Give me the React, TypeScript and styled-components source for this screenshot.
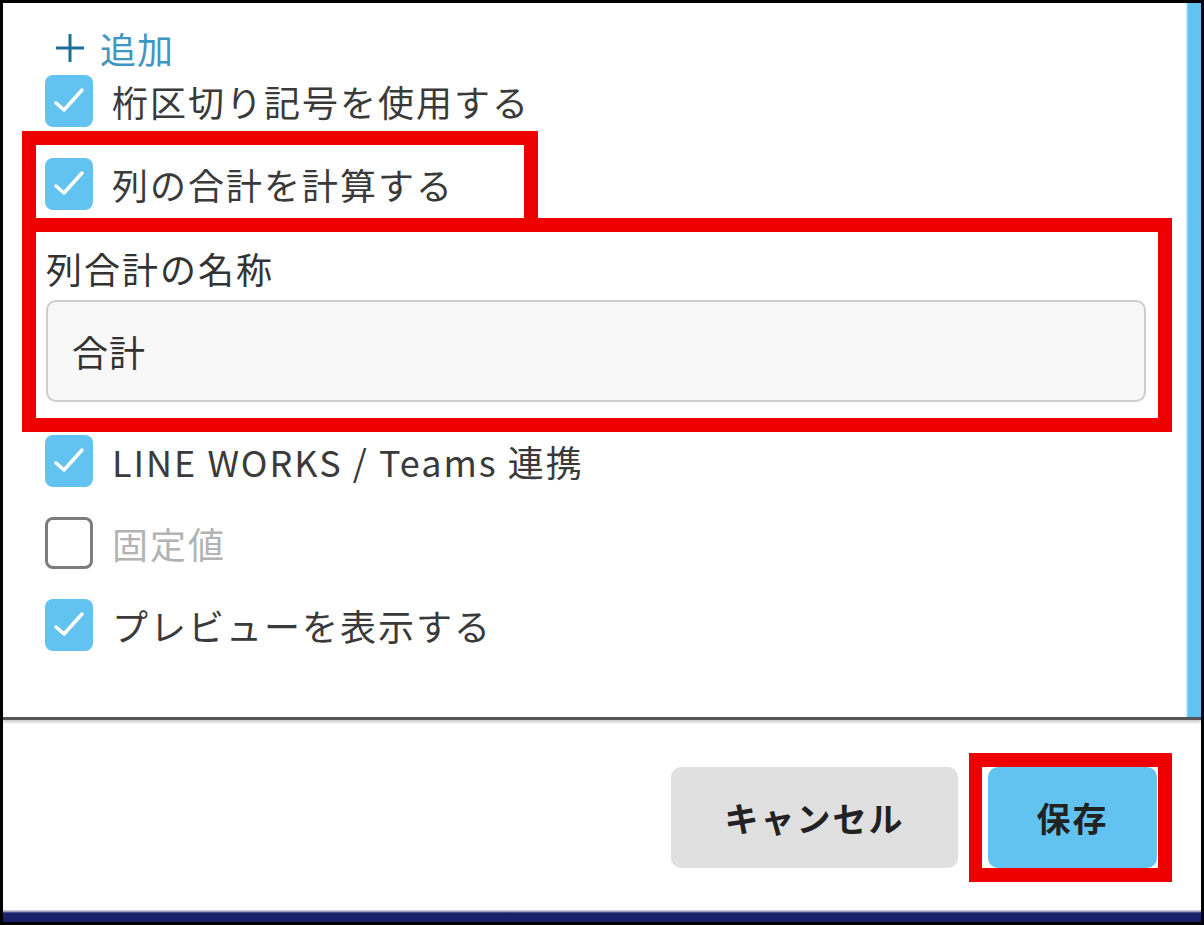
import React from "react";
import styled, { createGlobalStyle } from "styled-components";

const GlobalStyle = createGlobalStyle`
  html, body { margin: 0; padding: 0; background: #ffffff; overflow: hidden; }
  body { font-family: "Noto Sans CJK JP", "Noto Sans", sans-serif; }
  * { box-sizing: border-box; }
`;

const Frame = styled.div`
  width: 1204px;
  height: 925px;
  border: 3px solid #000;
  display: flex;
  flex-direction: column;
  background: #fff;
  overflow: hidden;
`;

const ScrollArea = styled.div`
  height: 714px;
  display: grid;
  grid-template-columns: 1fr 15px;
`;

const Content = styled.div`
  min-width: 0;
  display: flex;
  flex-direction: column;
  padding-left: 19px;
  padding-top: 25px;
`;

const Scrollbar = styled.div`
  height: 100%;
  background: linear-gradient(90deg, #c4e8f8 0, #c4e8f8 1px, #62c3f0 2px, #62c3f0 100%);
`;

const AddLink = styled.div`
  display: flex;
  align-items: center;
  gap: 14px;
  padding-left: 32px;
  height: 40px;
  font-size: 36px;
  line-height: 40px;
  letter-spacing: 1px;
  color: #3f96c2;
`;

const PlusIcon = styled.svg`
  width: 32px;
  height: 32px;
  display: block;
`;

const OptionRow = styled.div<{ $indent: number; $mt: number; $mb?: number }>`
  display: flex;
  align-items: center;
  gap: 19px;
  padding-left: ${(p) => p.$indent}px;
  margin-top: ${(p) => p.$mt}px;
  margin-bottom: ${(p) => p.$mb ?? 0}px;
  height: 52px;
`;

const Box = styled.span<{ $checked: boolean }>`
  width: 48px;
  height: 52px;
  flex: 0 0 48px;
  border-radius: 8px;
  display: flex;
  align-items: center;
  justify-content: center;
  background: ${(p) => (p.$checked ? "#62c3f0" : "#ffffff")};
  border: ${(p) => (p.$checked ? "none" : "3px solid #7c7c7c")};
`;

const OptionText = styled.span<{ $disabled?: boolean }>`
  font-size: 36px;
  line-height: 40px;
  letter-spacing: 2px;
  white-space: nowrap;
  color: ${(p) => (p.$disabled ? "#b3b3b3" : "#3a3a3a")};
`;

const Annotation = styled.div<{ $width: number; $noBottom?: boolean }>`
  width: ${(p) => p.$width}px;
  border: 14px solid #ee0000;
  border-bottom-width: ${(p) => (p.$noBottom ? 0 : 14)}px;
  display: flex;
  flex-direction: column;
`;

const FieldBlock = styled.div`
  display: flex;
  flex-direction: column;
  padding: 16px 12px 16px 10px;
`;

const FieldLabel = styled.div`
  font-size: 36px;
  line-height: 40px;
  letter-spacing: 2px;
  color: #333;
`;

const TextInput = styled.div`
  margin-top: 12px;
  height: 102px;
  border: 2px solid #cdcdcd;
  border-radius: 10px;
  background: #f8f8f8;
  display: flex;
  align-items: center;
  padding-left: 24px;
  font-size: 36px;
  letter-spacing: 1px;
  color: #333;
`;

const Divider = styled.div`
  height: 3px;
  background: #555;
  box-shadow: 0 2px 3px rgba(0, 0, 0, 0.25);
`;

const Footer = styled.div`
  flex: 1;
  display: flex;
  justify-content: flex-end;
  align-items: flex-start;
  gap: 11px;
  padding-top: 33px;
  padding-right: 29px;
`;

const Button = styled.div<{ $primary?: boolean }>`
  height: 101px;
  border-radius: 10px;
  display: flex;
  align-items: center;
  justify-content: center;
  font-size: 34px;
  font-weight: 700;
  letter-spacing: 2px;
  color: #222;
  background: ${(p) => (p.$primary ? "#62c3f0" : "#e0e0e0")};
  width: ${(p) => (p.$primary ? 169 : 287)}px;
`;

const CancelWrap = styled.div`
  padding-top: 14px;
`;

const Highlight = styled.div`
  border: 14px solid #ee0000;
  border-left-width: 13px;
  padding: 0 1px 0 6px;
  display: flex;
`;

const BottomBar = styled.div`
  height: 12px;
  background: linear-gradient(#c9c9d6 0, #c9c9d6 1px, #1b2170 3px, #1a1f66 100%);
`;

const Check = () => (
  <svg width="48" height="52" viewBox="0 0 48 52">
    <polyline
      points="11,28 19,35 37,15"
      fill="none"
      stroke="#ffffff"
      strokeWidth="3.5"
      strokeLinecap="round"
      strokeLinejoin="round"
    />
  </svg>
);

const Option = ({
  checked,
  label,
  indent,
  mt,
  mb,
  disabled,
}: {
  checked: boolean;
  label: string;
  indent: number;
  mt: number;
  mb?: number;
  disabled?: boolean;
}) => (
  <OptionRow $indent={indent} $mt={mt} $mb={mb}>
    <Box $checked={checked}>{checked && <Check />}</Box>
    <OptionText $disabled={disabled}>{label}</OptionText>
  </OptionRow>
);

export default function App() {
  return (
    <>
      <GlobalStyle />
      <Frame>
        <ScrollArea>
          <Content>
            <AddLink>
              <PlusIcon viewBox="0 0 32 32">
                <path d="M16 2 V30 M2 16 H30" stroke="#1d6f99" strokeWidth="3" fill="none" />
              </PlusIcon>
              追加
            </AddLink>
            <Option checked label="桁区切り記号を使用する" indent={23} mt={7} mb={4} />
            <Annotation $width={516} $noBottom>
              <Option checked label="列の合計を計算する" indent={9} mt={13} mb={8} />
            </Annotation>
            <Annotation $width={1150}>
              <FieldBlock>
                <FieldLabel>列合計の名称</FieldLabel>
                <TextInput>合計</TextInput>
              </FieldBlock>
            </Annotation>
            <Option checked label="LINE WORKS / Teams 連携" indent={23} mt={3} />
            <Option checked={false} disabled label="固定値" indent={23} mt={30} />
            <Option checked label="プレビューを表示する" indent={23} mt={30} />
          </Content>
          <Scrollbar />
        </ScrollArea>
        <Divider />
        <Footer>
          <CancelWrap>
            <Button>キャンセル</Button>
          </CancelWrap>
          <Highlight>
            <Button $primary>保存</Button>
          </Highlight>
        </Footer>
        <BottomBar />
      </Frame>
    </>
  );
}
